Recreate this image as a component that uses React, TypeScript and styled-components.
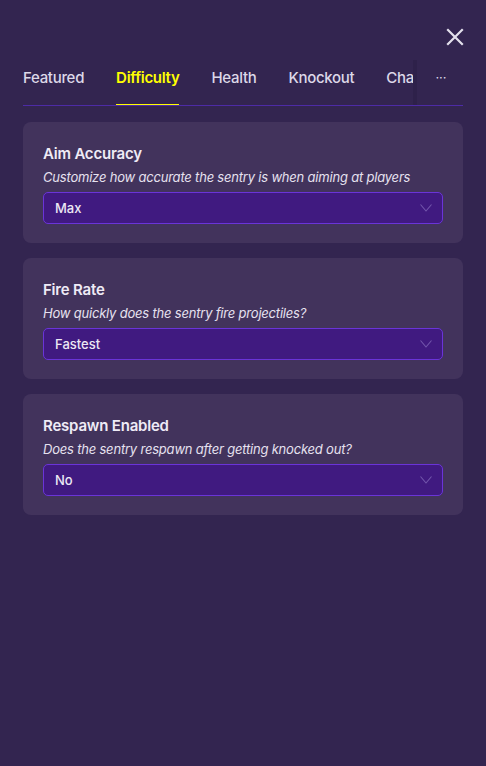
import styled, { createGlobalStyle } from 'styled-components';

const GlobalStyle = createGlobalStyle`
  html, body {
    margin: 0;
    padding: 0;
    background: #332550;
    font-family: Inter, 'Noto Sans', sans-serif;
    color: #ece8f4;
  }
  * {
    box-sizing: border-box;
  }
`;

const Page = styled.div`
  width: 486px;
  height: 766px;
  background: #332550;
  padding: 0 23px;
  overflow: hidden;
`;

const TopBar = styled.div`
  display: flex;
  justify-content: flex-end;
  padding-top: 28px;
  height: 60px;
`;

const CloseButton = styled.button`
  width: 18px;
  height: 18px;
  padding: 0;
  margin-right: -1px;
  border: none;
  background: transparent;
  cursor: pointer;
  svg {
    display: block;
  }
`;

const TabBar = styled.div`
  display: flex;
  align-items: stretch;
  border-bottom: 1px solid #4d2ba6;
  height: 46px;
`;

const TabScroller = styled.div`
  display: flex;
  gap: 32px;
  width: 394px;
  overflow: hidden;
  border-right: 4px solid rgba(20, 14, 40, 0.14);
`;

const Tab = styled.div<{ $active?: boolean }>`
  flex: 0 0 auto;
  font-size: 15px;
  letter-spacing: -0.3px;
  line-height: 20px;
  padding-top: 8px;
  font-weight: ${p => (p.$active ? 600 : 500)};
  color: ${p => (p.$active ? '#ffff00' : '#ddd8e8')};
  border-bottom: 2px solid ${p => (p.$active ? '#ffff00' : 'transparent')};
  margin-bottom: -1px;
  white-space: nowrap;
  &:last-child {
    flex: 0 1 auto;
    min-width: 0;
    overflow: hidden;
  }
`;

const MoreButton = styled.div`
  flex: 1;
  text-align: center;
  color: #ddd8e8;
  font-size: 13px;
  line-height: 20px;
  padding-top: 7px;
  padding-left: 2px;
`;

const CardList = styled.div`
  display: flex;
  flex-direction: column;
  gap: 15px;
  margin-top: 16px;
`;

const Card = styled.div`
  background: #42335c;
  border-radius: 8px;
  padding: 21px 20px 19px;
`;

const Title = styled.div`
  font-size: 15px;
  font-weight: 600;
  letter-spacing: -0.2px;
  line-height: 22px;
  color: #efebf6;
`;

const Description = styled.div`
  font-size: 13px;
  font-style: italic;
  letter-spacing: -0.2px;
  line-height: 20px;
  color: #e6e1ef;
  margin-top: 2px;
  margin-bottom: 5px;
`;

const Select = styled.div`
  display: flex;
  align-items: center;
  justify-content: space-between;
  height: 32px;
  padding: 0 10px 0 11px;
  background: #401a80;
  border: 1px solid #6a34d8;
  border-radius: 5px;
  font-size: 13px;
  font-weight: 500;
  color: #ece8f4;
  svg {
    display: block;
  }
`;

const Chevron = () => (
  <svg width="12" height="8" viewBox="0 0 12 8">
    <path d="M0.5 0.5 L6 7 L11.5 0.5" fill="none" stroke="#7256ab" strokeWidth="1.1" />
  </svg>
);

const settings = [
  {
    title: 'Aim Accuracy',
    description: 'Customize how accurate the sentry is when aiming at players',
    value: 'Max',
  },
  {
    title: 'Fire Rate',
    description: 'How quickly does the sentry fire projectiles?',
    value: 'Fastest',
  },
  {
    title: 'Respawn Enabled',
    description: 'Does the sentry respawn after getting knocked out?',
    value: 'No',
  },
];

const tabs = ['Featured', 'Difficulty', 'Health', 'Knockout', 'Character'];

const App = () => {
  return (
    <>
      <GlobalStyle />
      <Page>
        <TopBar>
          <CloseButton aria-label="Close">
            <svg width="18" height="18" viewBox="0 0 18 18">
              <path d="M2 2 L16 16 M16 2 L2 16" stroke="#e4e0ec" strokeWidth="2.2" strokeLinecap="square" />
            </svg>
          </CloseButton>
        </TopBar>
        <TabBar>
          <TabScroller>
            {tabs.map(t => (
              <Tab key={t} $active={t === 'Difficulty'}>
                {t}
              </Tab>
            ))}
          </TabScroller>
          <MoreButton>···</MoreButton>
        </TabBar>
        <CardList>
          {settings.map(s => (
            <Card key={s.title}>
              <Title>{s.title}</Title>
              <Description>{s.description}</Description>
              <Select>
                <span>{s.value}</span>
                <Chevron />
              </Select>
            </Card>
          ))}
        </CardList>
      </Page>
    </>
  );
};

export default App;
